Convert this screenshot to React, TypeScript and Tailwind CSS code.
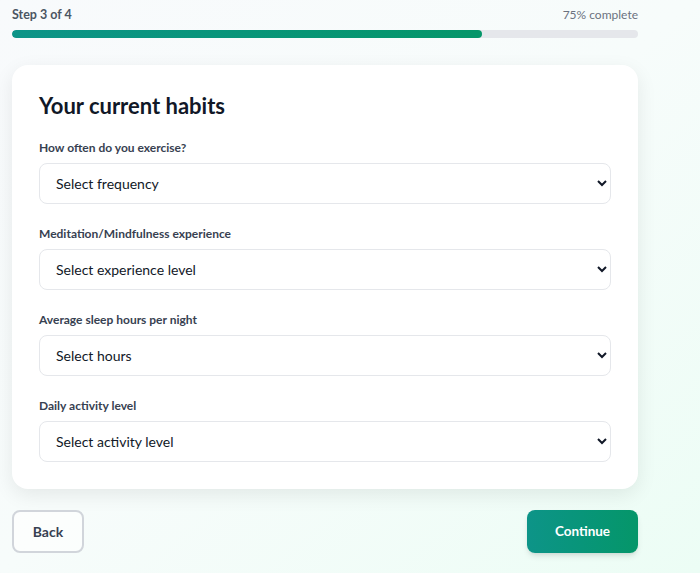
import React from "react";

const font = { fontFamily: "Lato, 'Noto Sans', sans-serif" };

function Field({ label, placeholder }: { label: string; placeholder: string }) {
  return (
    <div className="flex flex-col">
      <label className="block text-[12px] leading-5 font-bold text-[#374151] mb-[5px]">{label}</label>
      <select
        defaultValue=""
        className="h-[41px] w-full rounded-lg border border-[#e5e7eb] bg-white pl-3 pr-2 text-[14px] text-[#111827] outline-none"
        style={font}
      >
        <option value="" disabled>
          {placeholder}
        </option>
      </select>
    </div>
  );
}

export default function App() {
  return (
    <div
      className="min-h-screen w-full bg-gradient-to-br from-[#f8fafc] via-[#f7fcfb] to-[#ecfdf5]"
      style={font}
    >
      <div className="w-[626px] ml-3 pt-[5px]">
        <div className="flex items-center justify-between h-5">
          <span className="text-[12.5px] font-bold text-[#4b5563]">Step 3 of 4</span>
          <span className="text-[12px] text-[#6b7280]">75% complete</span>
        </div>
        <div className="mt-[5px] h-2 w-full rounded-full bg-[#e5e7eb] overflow-hidden">
          <div className="h-full rounded-full bg-gradient-to-r from-[#0d9488] to-[#059669]" style={{ width: "75%" }} />
        </div>

        <div className="mt-[27px] rounded-2xl bg-white p-[27px] shadow-[0_6px_20px_rgba(0,0,0,0.08)]">
          <h2 className="text-[22px] leading-7 font-bold text-[#111827]">Your current habits</h2>
          <div className="mt-[18px] flex flex-col gap-5">
            <Field label="How often do you exercise?" placeholder="Select frequency" />
            <Field label="Meditation/Mindfulness experience" placeholder="Select experience level" />
            <Field label="Average sleep hours per night" placeholder="Select hours" />
            <Field label="Daily activity level" placeholder="Select activity level" />
          </div>
        </div>

        <div className="mt-[21px] flex items-center justify-between">
          <button className="h-[43px] w-[72px] rounded-lg border-2 border-[#d1d5db] bg-white/60 text-[14px] font-bold text-[#374151]">
            Back
          </button>
          <button className="h-[43px] w-[111px] rounded-lg bg-gradient-to-r from-[#0d9488] to-[#059669] text-[13.5px] font-bold text-white shadow-md">
            Continue
          </button>
        </div>
      </div>
    </div>
  );
}
